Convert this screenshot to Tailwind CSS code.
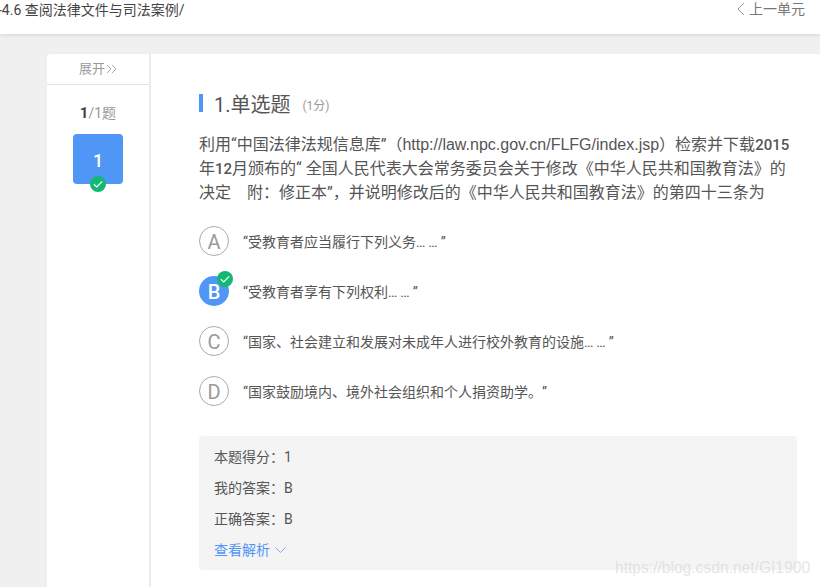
<!DOCTYPE html>
<html lang="zh-CN">
<head>
    <meta charset="UTF-8">
    <title>查阅法律文件与司法案例</title>
    <script src="https://cdn.jsdelivr.net/npm/@tailwindcss/browser@4"></script>
</head>
<body class="relative h-[587px] w-[820px] overflow-hidden bg-[#f0f0f0] font-['Roboto','Noto_Sans_CJK_SC',sans-serif] text-[#4a4a4a] [text-spacing-trim:space-all]">
    <!-- Top bar -->
    <header class="relative flex h-[34px] items-start justify-between bg-white pt-[1px] shadow-[0_1px_4px_rgba(0,0,0,0.12)]">
        <div class="-ml-[2px] text-[14px] leading-[18px] text-[#444]">-4.6 查阅法律文件与司法案例/</div>
        <div class="flex items-center pr-[15px] text-[14px] leading-[16px] text-[#777]">
            <svg class="mr-[4px] h-[14px] w-[9px]" viewBox="0 0 9 14" fill="none" stroke="#999" stroke-width="1"><path d="M8 1 2 7l6 6"/></svg>
            上一单元
        </div>
    </header>

    <main class="ml-[47px] mt-[20px] flex h-[533px]">
        <!-- Sidebar -->
        <aside class="w-[102px] rounded-tl-[4px] bg-white shadow-[1px_0_3px_rgba(0,0,0,0.04)]">
            <div class="flex h-[31px] items-center justify-center gap-[1px] border-b border-[#e2e2e2] text-[13px] text-[#999]">
                展开
                <svg class="h-[10px] w-[11px]" viewBox="0 0 11 10" fill="none" stroke="#aaa" stroke-width="1"><path d="M1 1l4 4-4 4M6 1l4 4-4 4"/></svg>
            </div>
            <div class="mt-[18px] text-center text-[14px] leading-[20px] text-[#999]"><b class="text-[15px] text-[#444]">1</b>/1题</div>
            <div class="relative ml-[26px] mt-[11px] flex h-[50px] w-[50px] items-center justify-center rounded-[4px] bg-[#4f96f6] pt-[2px] text-[18px] font-medium text-white">
                1
                <svg class="absolute bottom-[-8px] left-[17px] h-[16px] w-[16px]" viewBox="0 0 16 16"><circle cx="8" cy="8" r="8" fill="#13b873"/><path d="M3.8 8.2 6.8 11l5.4-5.6" fill="none" stroke="#fff" stroke-width="1.2"/></svg>
            </div>
        </aside>

        <!-- Question -->
        <section class="ml-[2px] flex-1 bg-white pl-[48px] pr-[23px] pt-[40px]">
            <div class="flex h-[18px] items-center border-l-[4px] border-[#4f96f6] pl-[11px]">
                <span class="pt-[4px] text-[20px] text-[#555]">1.单选题</span>
                <span class="ml-[12px] pt-[5px] text-[12px] text-[#999]">(1分)</span>
            </div>
            <p class="mt-[21px] text-[16px] leading-[24px] text-[#555]">利用“中国法律法规信息库”（<span class="font-['Liberation_Sans',sans-serif]">http://law.npc.gov.cn/FLFG/index.jsp</span>）检索并下载<span class="text-[15px] font-medium">2015</span>年<span class="text-[15px] font-medium">12</span>月颁布的“ 全国人民代表大会常务委员会关于修改《中华人民共和国教育法》的决定　附：修正本”，并说明修改后的《中华人民共和国教育法》的第四十三条为</p>

            <ul class="mt-[21px] flex flex-col gap-[20px] text-[14px] text-[#555]">
                <li class="flex h-[30px] items-center gap-[14px]">
                    <span class="flex h-[30px] w-[30px] items-center justify-center rounded-full border border-[#aaa] pt-[1px] text-[20px] text-[#999]">A</span>
                    <span class="pt-[3px]">“受教育者应当履行下列义务<span class="tracking-[3px]">……</span>”</span>
                </li>
                <li class="flex h-[30px] items-center gap-[14px]">
                    <span class="relative flex h-[30px] w-[30px] items-center justify-center rounded-full bg-[#4f96f6] pt-[1px] text-[20px] font-medium text-white">
                        B
                        <svg class="absolute right-[-4px] top-[-5px] h-[16px] w-[16px]" viewBox="0 0 16 16"><circle cx="8" cy="8" r="8" fill="#13b873"/><path d="M3.8 8.2 6.8 11l5.4-5.6" fill="none" stroke="#fff" stroke-width="1.2"/></svg>
                    </span>
                    <span class="pt-[3px]">“受教育者享有下列权利<span class="tracking-[3px]">……</span>”</span>
                </li>
                <li class="flex h-[30px] items-center gap-[14px]">
                    <span class="flex h-[30px] w-[30px] items-center justify-center rounded-full border border-[#aaa] pt-[1px] text-[20px] text-[#999]">C</span>
                    <span class="pt-[3px]">“国家、社会建立和发展对未成年人进行校外教育的设施<span class="tracking-[3px]">……</span>”</span>
                </li>
                <li class="flex h-[30px] items-center gap-[14px]">
                    <span class="flex h-[30px] w-[30px] items-center justify-center rounded-full border border-[#aaa] pt-[1px] text-[20px] text-[#999]">D</span>
                    <span class="pt-[3px]">“国家鼓励境内、境外社会组织和个人捐资助学。”</span>
                </li>
            </ul>

            <div class="mt-[30px] flex h-[134px] flex-col gap-[11px] rounded-[4px] bg-[#f4f4f4] px-[15px] pt-[11px] text-[14px] leading-[20px] text-[#555]">
                <div>本题得分：1</div>
                <div>我的答案：B</div>
                <div>正确答案：B</div>
                <div class="flex items-center gap-[5px] text-[#4f96f6]">
                    查看解析
                    <svg class="h-[6px] w-[11px]" viewBox="0 0 11 6" fill="none" stroke="#7db1f6" stroke-width="1"><path d="M.5.5l5 5 5-5"/></svg>
                </div>
            </div>
        </section>
    </main>

    <!-- Watermark -->
    <div class="absolute left-[615px] top-[558px] text-[15.6px] leading-[20px] text-[#d9d9d9]/70 font-['Liberation_Sans',sans-serif]">https://blog.csdn.net/GI1900</div>
</body>
</html>
